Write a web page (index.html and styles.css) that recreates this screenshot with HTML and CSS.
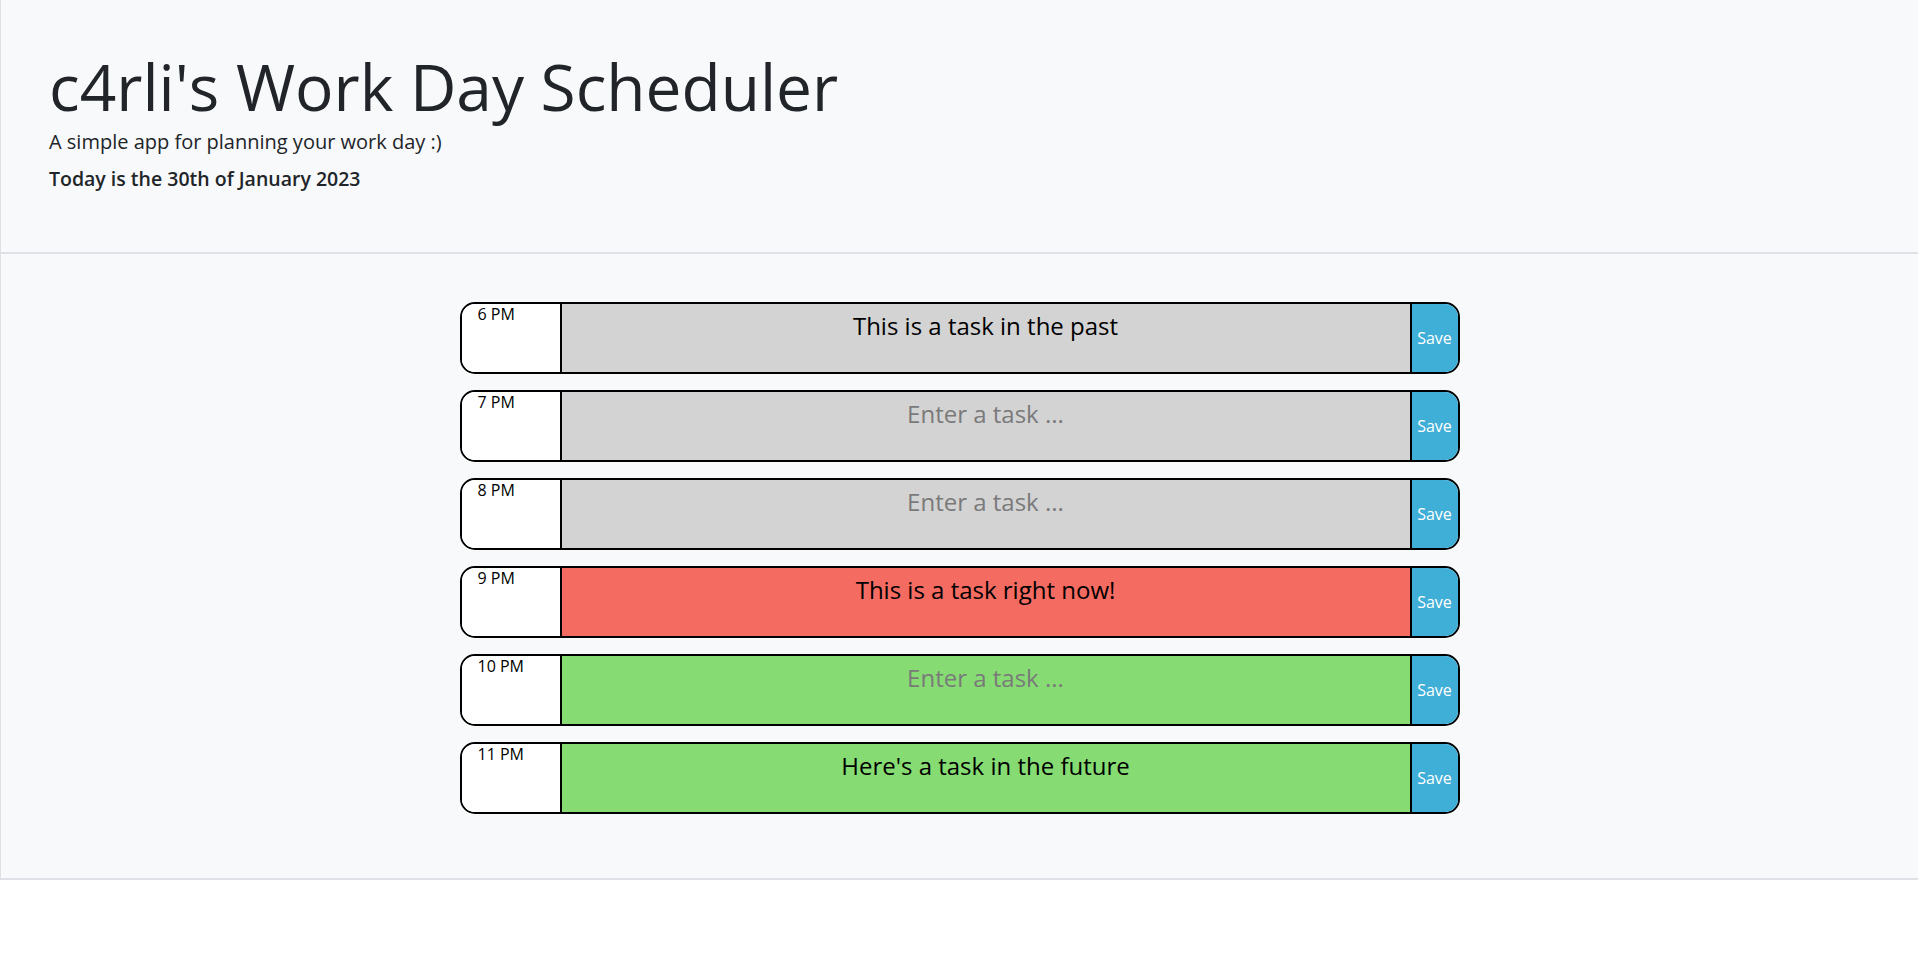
FILE: index.html
```html
<!DOCTYPE html>
<html lang="en">
<head>
<meta charset="utf-8">
<title>c4rli's Work Day Scheduler</title>
<link rel="stylesheet" href="styles.css">
</head>
<body>
<header class="header">
  <h1 class="title">c4rli's Work Day Scheduler</h1>
  <p class="lead">A simple app for planning your work day :)</p>
  <p class="today">Today is the 30th of January 2023</p>
</header>
<main class="planner">
  <div class="slot">
    <div class="hour">6 PM</div>
    <textarea class="task past" placeholder="Enter a task ...">This is a task in the past</textarea>
    <button class="save">Save</button>
  </div>
  <div class="slot">
    <div class="hour">7 PM</div>
    <textarea class="task past" placeholder="Enter a task ..."></textarea>
    <button class="save">Save</button>
  </div>
  <div class="slot">
    <div class="hour">8 PM</div>
    <textarea class="task past" placeholder="Enter a task ..."></textarea>
    <button class="save">Save</button>
  </div>
  <div class="slot">
    <div class="hour">9 PM</div>
    <textarea class="task present" placeholder="Enter a task ...">This is a task right now!</textarea>
    <button class="save">Save</button>
  </div>
  <div class="slot">
    <div class="hour">10 PM</div>
    <textarea class="task future" placeholder="Enter a task ..."></textarea>
    <button class="save">Save</button>
  </div>
  <div class="slot">
    <div class="hour">11 PM</div>
    <textarea class="task future" placeholder="Enter a task ...">Here's a task in the future</textarea>
    <button class="save">Save</button>
  </div>
</main>
</body>
</html>
```
FILE: styles.css
```css
* { box-sizing: border-box; }

body {
  margin: 0;
  background: #ffffff;
  font-family: "Open Sans", "Noto Sans", sans-serif;
  color: #212529;
}

.header {
  background: #f8f9fa;
  border-left: 1px solid #dee2e6;
  border-bottom: 2px solid #dee2e6;
  padding: 49px 48px 59px;
}

.title {
  margin: 0;
  font-size: 64px;
  font-weight: 400;
  line-height: 1.2;
}

.lead {
  margin: 1px 0 0;
  font-size: 20px;
  font-weight: 400;
  line-height: 1.5;
}

.today {
  margin: 7px 0 0;
  font-size: 19.5px;
  font-weight: 600;
  line-height: 1.5;
}

.planner {
  background: #f8f9fa;
  border-left: 1px solid #dee2e6;
  border-bottom: 2px solid #dee2e6;
  padding: 48px 0 64px;
  display: flex;
  flex-direction: column;
  align-items: center;
  gap: 16px;
}

.slot {
  width: 1000px;
  height: 72px;
  display: flex;
  border: 2px solid #000;
  border-radius: 15px;
  overflow: hidden;
  background: #fff;
}

.hour {
  width: 100px;
  flex: none;
  border-right: 2px solid #000;
  background: #fff;
  color: #000;
  font-size: 16px;
  font-weight: 400;
  line-height: 1;
  padding: 2px 0 0 16px;
}

.task {
  flex: 1;
  border: none;
  resize: none;
  margin: 0;
  font-family: "Open Sans", "Noto Sans", sans-serif;
  font-size: 24px;
  line-height: 1.5;
  padding: 4px 10px 0;
  text-align: center;
  color: #000;
  outline: none;
}

.task::placeholder { color: #7a7a7a; }

.past { background: #d3d3d3; }
.present { background: #f46b61; }
.future { background: #86dc73; }

.save {
  width: 48px;
  flex: none;
  border: none;
  border-left: 2px solid #000;
  background: #40afd7;
  color: #fff;
  font-family: "Open Sans", "Noto Sans", sans-serif;
  font-size: 16px;
  padding: 0;
  margin: 0;
}
```
